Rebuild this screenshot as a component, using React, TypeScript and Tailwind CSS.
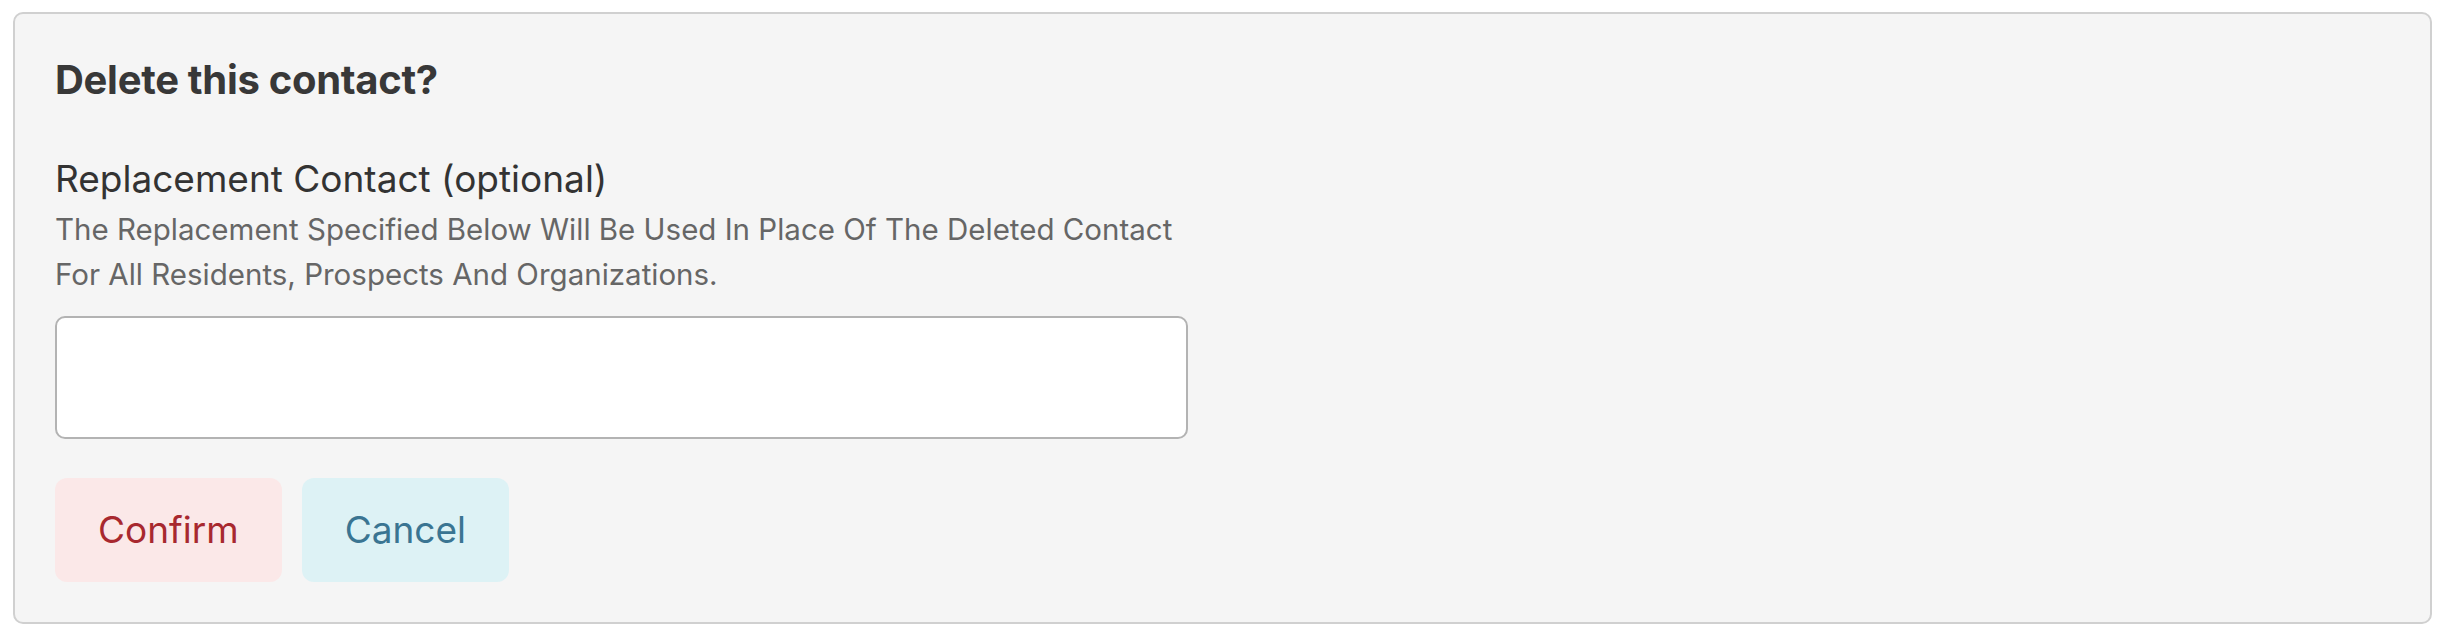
import React from "react";

export default function App() {
  return (
    <div className="w-[2444px] h-[636px] bg-white p-[12px_12px_12px_13px] font-['Inter',_sans-serif]">
      <div className="h-full rounded-[10px] border-2 border-[#d0d0d0] bg-[#f5f5f5] p-[40px] flex flex-col">
        <h2 className="text-[40px] font-bold tracking-[-0.3px] leading-[51px] text-[#383838]">Delete this contact?</h2>
        <div className="mt-[52px] text-[37px] leading-[44px] text-[#333333]">Replacement Contact (optional)</div>
        <p className="mt-[6px] w-[1150px] text-[29.5px] leading-[45px] text-[#666666]">
          The Replacement Specified Below Will Be Used In Place Of The Deleted Contact For All Residents, Prospects And Organizations.
        </p>
        <input
          type="text"
          className="mt-[19px] h-[124px] w-[1133px] rounded-[10px] border-2 border-[#b3b3b3] bg-white px-4 outline-none"
        />
        <div className="mt-[39px] flex gap-[20px]">
          <button className="h-[104px] rounded-[12px] bg-[#fbe8e8] px-[43px] text-[37px] text-[#a8282f]">Confirm</button>
          <button className="h-[104px] rounded-[12px] bg-[#ddf2f5] px-[43px] text-[37px] text-[#3a7592]">Cancel</button>
        </div>
      </div>
    </div>
  );
}
